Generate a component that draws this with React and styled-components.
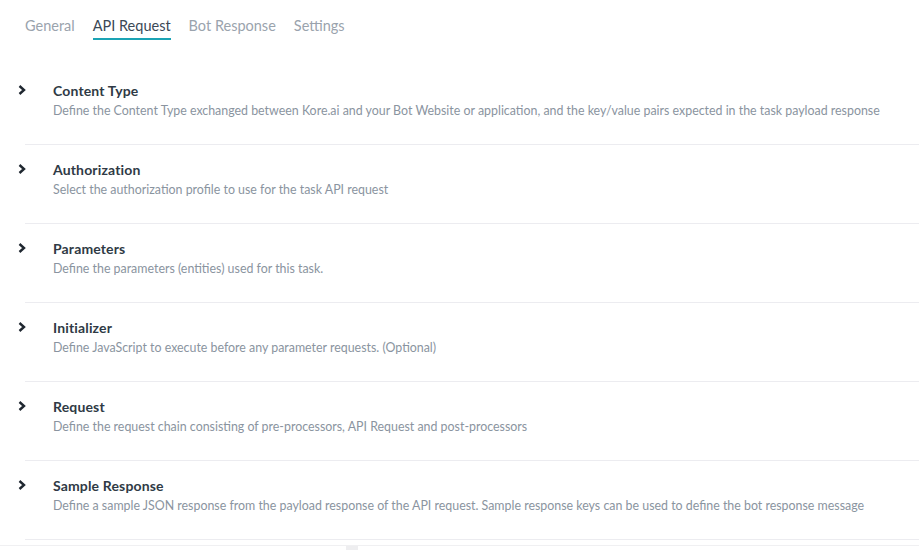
import React from 'react'
import styled, { createGlobalStyle } from 'styled-components'

const Global = createGlobalStyle`
  html, body {
    margin: 0;
    padding: 0;
    background: #fff;
    font-family: Lato, "Open Sans", sans-serif;
  }
`

const Page = styled.div`
  width: 919px;
  height: 558px;
  overflow: hidden;
  position: relative;
`

const Tabs = styled.div`
  display: flex;
  gap: 18px;
  padding: 17px 0 0 25px;
  height: 48px;
  box-sizing: border-box;
`

const Tab = styled.div`
  font-size: 14.5px;
  line-height: 18px;
  color: ${(p) => (p.active ? '#3b4856' : '#9aa3ad')};
  padding-bottom: 3px;
  border-bottom: 2px solid ${(p) => (p.active ? '#1ba3b4' : 'transparent')};
  height: 18px;
`

const List = styled.div`
  padding-top: 18px;
`

const Section = styled.div`
  display: flex;
  margin-left: 25px;
  height: 78px;
  border-bottom: 1px solid #ececf0;
  box-sizing: content-box;
`

const Chevron = styled.div`
  width: 28px;
  margin-left: -7px;
  padding-top: 19px;
  svg {
    display: block;
  }
`

const Body = styled.div`
  padding-top: 16px;
  margin-left: 7px;
`

const Title = styled.div`
  font-size: 14px;
  font-weight: 700;
  line-height: 17px;
  color: #2f3a45;
  letter-spacing: 0.15px;
`

const Desc = styled.div`
  font-size: 12.4px;
  line-height: 23px;
  color: #8a94a0;
`

const Footer = styled.div`
  border-top: 1px solid #f0f0f2;
  margin-top: 5px;
  height: 12px;
  display: flex;
  padding-left: 346px;
`

const Thumb = styled.div`
  width: 12px;
  height: 4px;
  background: #eeeef0;
`

const items = [
  ['Content Type', 'Define the Content Type exchanged between Kore.ai and your Bot Website or application, and the key/value pairs expected in the task payload response'],
  ['Authorization', 'Select the authorization profile to use for the task API request'],
  ['Parameters', 'Define the parameters (entities) used for this task.'],
  ['Initializer', 'Define JavaScript to execute before any parameter requests. (Optional)'],
  ['Request', 'Define the request chain consisting of pre-processors, API Request and post-processors'],
  ['Sample Response', 'Define a sample JSON response from the payload response of the API request. Sample response keys can be used to define the bot response message'],
]

const Arrow = () => (
  <svg width='8' height='10' viewBox='0 0 8 10'>
    <path d='M1.5 1 L6 5 L1.5 9' fill='none' stroke='#1f2730' strokeWidth='2.4' />
  </svg>
)

export default function App() {
  return (
    <Page>
      <Global />
      <Tabs>
        <Tab>General</Tab>
        <Tab active>API Request</Tab>
        <Tab>Bot Response</Tab>
        <Tab>Settings</Tab>
      </Tabs>
      <List>
        {items.map(([t, d]) => (
          <Section key={t}>
            <Chevron>
              <Arrow />
            </Chevron>
            <Body>
              <Title>{t}</Title>
              <Desc>{d}</Desc>
            </Body>
          </Section>
        ))}
      </List>
      <Footer>
        <Thumb />
      </Footer>
    </Page>
  )
}
